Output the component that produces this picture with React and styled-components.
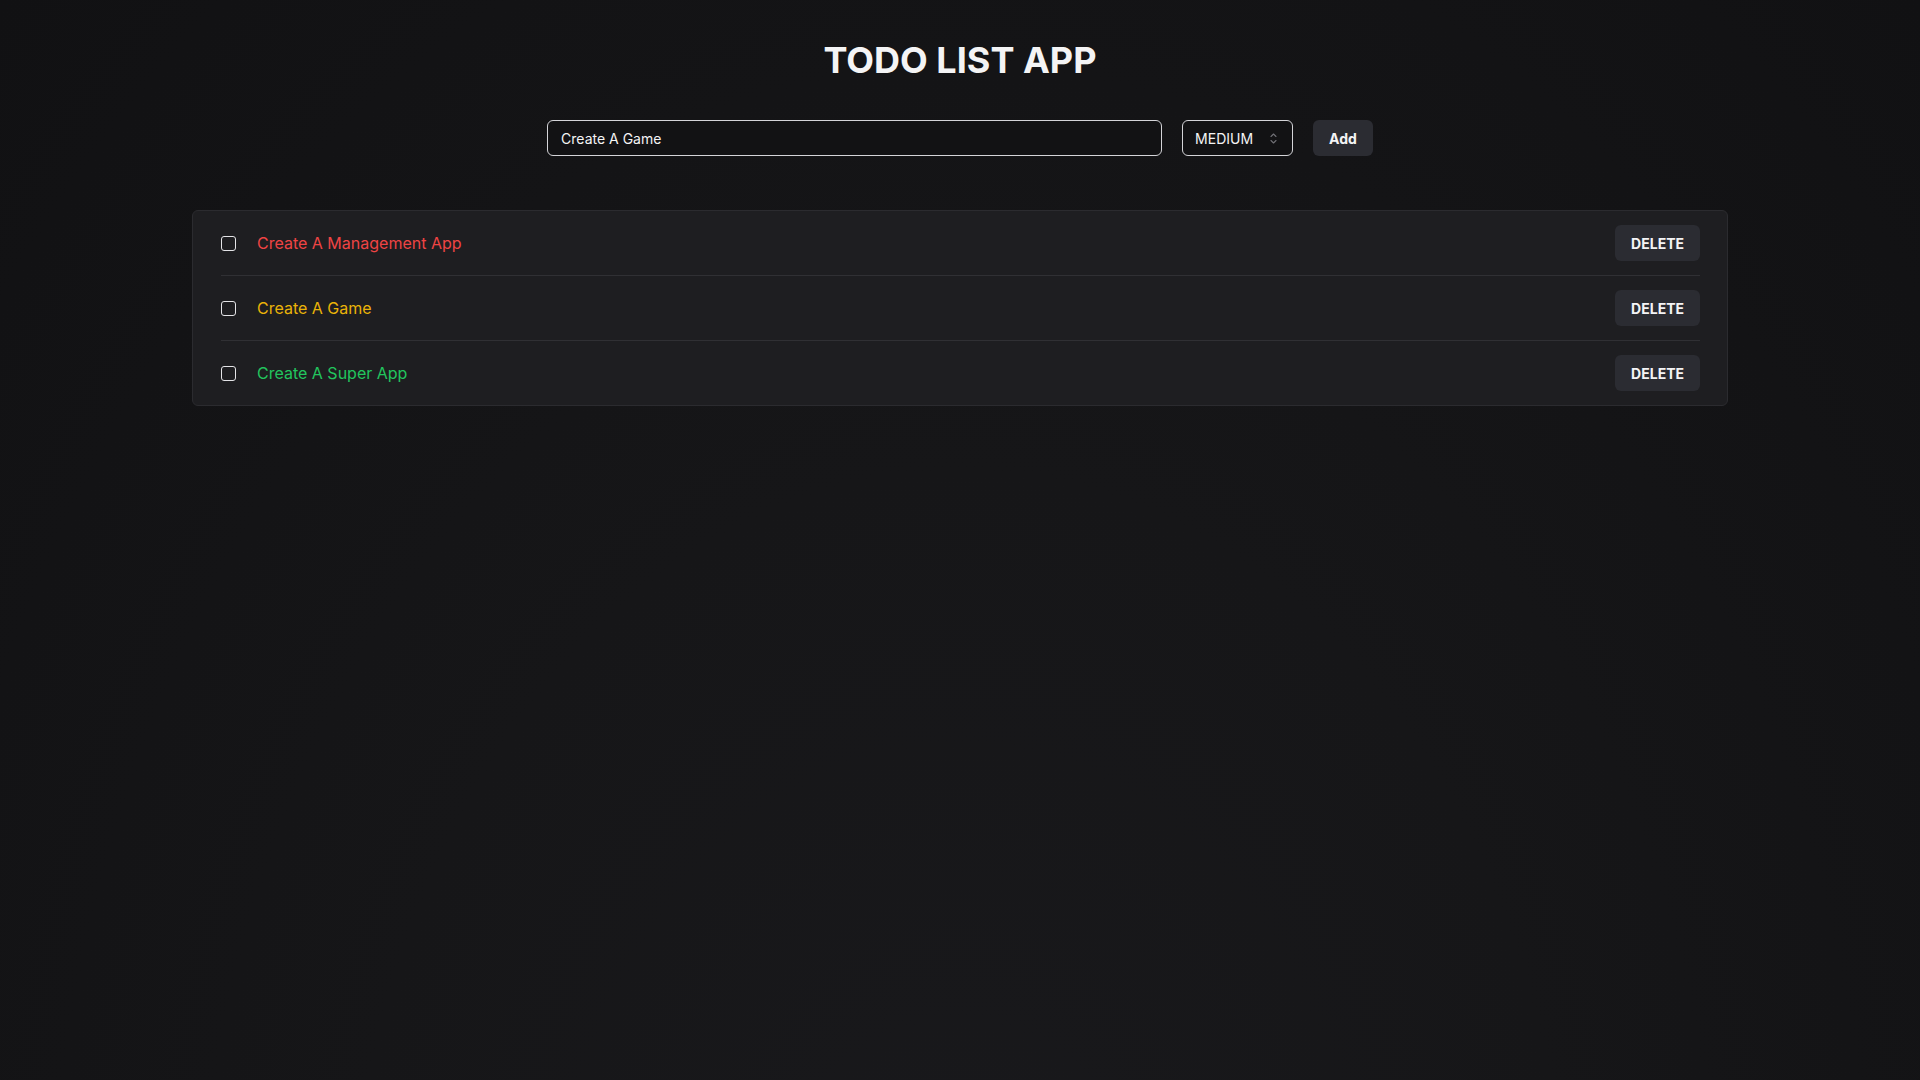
import React, { useState } from "react";
import styled, { createGlobalStyle } from "styled-components";

const GlobalStyle = createGlobalStyle`
  * { box-sizing: border-box; }
  html, body { margin: 0; padding: 0; }
  body {
    min-height: 100vh;
    background: radial-gradient(ellipse at 50% 120%, #19191c 0%, #161618 45%, #111113 100%);
    background-color: #131315;
    font-family: Inter, "Noto Sans", sans-serif;
    color: #f4f4f5;
  }
`;

const Page = styled.main`
  min-height: 100vh;
  display: flex;
  flex-direction: column;
  align-items: center;
  padding-top: 38px;
`;

const Title = styled.h1`
  margin: 0 0 38px;
  font-size: 36px;
  font-weight: 700;
  line-height: normal;
  color: #f4f4f5;
`;

const Form = styled.form`
  display: flex;
  align-items: center;
  gap: 20px;
  margin-bottom: 54px;
`;

const TextInput = styled.input`
  width: 615px;
  height: 36px;
  padding: 0 13px;
  background: #121214;
  border: 1px solid #d4d4d8;
  border-radius: 6px;
  color: #f4f4f5;
  font-family: Inter, sans-serif;
  font-size: 14px;
  outline: none;
`;

const SelectWrap = styled.div`
  position: relative;
  width: 111px;
  height: 36px;
`;

const Select = styled.select`
  appearance: none;
  width: 100%;
  height: 100%;
  padding: 0 12px;
  background: #121214;
  border: 1px solid #d4d4d8;
  border-radius: 6px;
  color: #f4f4f5;
  font-family: Inter, sans-serif;
  font-size: 14px;
  outline: none;
`;

const Chevron = styled.svg`
  position: absolute;
  right: 16px;
  top: 13px;
  pointer-events: none;
`;

const Button = styled.button`
  height: 36px;
  padding: 0 16px;
  background: #2b2c32;
  border: none;
  border-radius: 6px;
  color: #f4f4f5;
  font-family: Inter, sans-serif;
  font-size: 14px;
  font-weight: 700;
  cursor: pointer;
`;

const Card = styled.section`
  width: 1536px;
  padding: 0 27px 0 28px;
  background: #1e1e21;
  border: 1px solid #2b2b2f;
  border-radius: 6px;
`;

const Row = styled.div`
  display: flex;
  align-items: center;
  height: 65px;
  border-bottom: 1px solid #303034;
  &:last-child {
    border-bottom: none;
    height: 64px;
  }
`;

const Check = styled.span`
  width: 15px;
  height: 15px;
  border: 1.5px solid #e4e4e7;
  border-radius: 3px;
  flex-shrink: 0;
  margin-right: 21px;
`;

const Label = styled.span`
  flex: 1;
  font-size: 16px;
  color: ${(p) => p.$color};
`;

const colors = { high: "#ef4444", medium: "#eab308", low: "#22c55e" };

export default function App() {
  const [text, setText] = useState("Create A Game");
  const todos = [
    { id: 1, text: "Create A Management App", p: "high" },
    { id: 2, text: "Create A Game", p: "medium" },
    { id: 3, text: "Create A Super App", p: "low" },
  ];
  return (
    <>
      <GlobalStyle />
      <Page>
        <Title>TODO LIST APP</Title>
        <Form onSubmit={(e) => e.preventDefault()}>
          <TextInput value={text} onChange={(e) => setText(e.target.value)} />
          <SelectWrap>
            <Select defaultValue="MEDIUM">
              <option>HIGH</option>
              <option>MEDIUM</option>
              <option>LOW</option>
            </Select>
            <Chevron width="7" height="11" viewBox="0 0 7 11" fill="none">
              <path d="M1 3.5 L3.5 1 L6 3.5 M1 7.5 L3.5 10 L6 7.5" stroke="#6f6f75" strokeWidth="1.1" strokeLinecap="round" strokeLinejoin="round" />
            </Chevron>
          </SelectWrap>
          <Button type="submit">Add</Button>
        </Form>
        <Card>
          {todos.map((t) => (
            <Row key={t.id}>
              <Check />
              <Label $color={colors[t.p]}>{t.text}</Label>
              <Button>DELETE</Button>
            </Row>
          ))}
        </Card>
      </Page>
    </>
  );
}
